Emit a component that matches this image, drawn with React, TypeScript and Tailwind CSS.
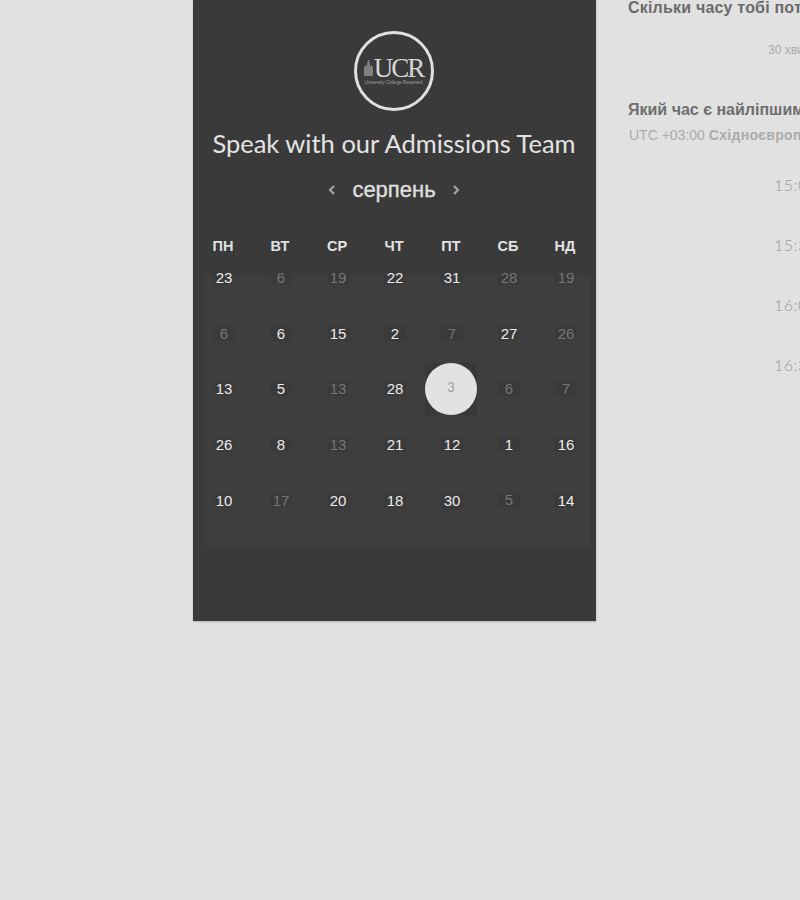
import React from "react";

const weekdays = ["ПН", "ВТ", "СР", "ЧТ", "ПТ", "СБ", "НД"];

type Day = { n: number; dim?: boolean; sel?: boolean; up?: boolean };
const days: Day[] = [
  { n: 23 }, { n: 6, dim: true }, { n: 19, dim: true }, { n: 22 }, { n: 31 }, { n: 28, dim: true }, { n: 19, dim: true },
  { n: 6, dim: true }, { n: 6 }, { n: 15 }, { n: 2 }, { n: 7, dim: true }, { n: 27 }, { n: 26, dim: true },
  { n: 13 }, { n: 5 }, { n: 13, dim: true }, { n: 28 }, { n: 3, sel: true }, { n: 6, dim: true }, { n: 7, dim: true },
  { n: 26 }, { n: 8 }, { n: 13, dim: true }, { n: 21 }, { n: 12 }, { n: 1 }, { n: 16 },
  { n: 10 }, { n: 17, dim: true }, { n: 20 }, { n: 18 }, { n: 30 }, { n: 5, dim: true, up: true }, { n: 14 },
];

const slots = [
  { t: "15:00", cls: "h-[61px] pt-[14px] border-b border-[#dcdcdc]" },
  { t: "15:30", cls: "h-[60px] pt-[13px]" },
  { t: "16:00", cls: "h-[51px] pt-[13px] border-b border-[#dcdcdc]" },
  { t: "16:30", cls: "h-[59px] pt-[22px] border-b border-[#dcdcdc]" },
];

function Logo() {
  return (
    <div className="-ml-[2px] w-[80px] h-[80px] rounded-full border-[3.5px] border-[#e0e0e0] flex flex-col items-center justify-center">
      <div className="flex items-end h-[20px] gap-[1px]">
        <svg width="9" height="17" viewBox="0 0 9 17" className="mb-[2px]">
          <path d="M3 17V5l1-4h1l1 4v12zM0 17V8l2-2 1 2v9zM6 17V8l1-2 2 2v9z" fill="#808080" />
        </svg>
        <span className="font-['Liberation_Serif'] text-[27px] leading-[20px] tracking-[-2px] text-[#d6d6d6]">UCR</span>
      </div>
      <span className="mt-[2px] font-['Liberation_Sans'] text-[4.6px] leading-[5px] text-[#a0a0a0] whitespace-nowrap">University College Reserved</span>
    </div>
  );
}

export default function App() {
  return (
    <div className="w-[800px] h-[900px] overflow-hidden bg-[#e1e1e1] flex items-start pl-[193px] font-['Liberation_Sans',sans-serif]">
      <div className="w-[403px] h-[621px] shrink-0 bg-[#3a3a3a] shadow-[0_1px_2px_rgba(0,0,0,0.2)] flex flex-col">
        <div className="flex justify-center pt-[31px]">
          <Logo />
        </div>
        <h1 className="mt-[15px] h-[34px] -ml-[1px] text-center font-['Lato',sans-serif] text-[25.5px] leading-[34px] text-[#e4e4e4] whitespace-nowrap">
          Speak with our Admissions Team
        </h1>
        <div className="mt-[14px] h-[32px] flex items-center justify-center gap-[14px] pr-[1px]">
          <svg width="10" height="12" viewBox="0 0 10 12" fill="none" stroke="#a3a3a3" strokeWidth="2.2"><path d="M7 2 3 6l4 4" /></svg>
          <span className="text-[22px] leading-[32px] text-[#e0e0e0] w-[86px] text-center [-webkit-text-stroke:0.3px_#e0e0e0]">серпень</span>
          <svg width="10" height="12" viewBox="0 0 10 12" fill="none" stroke="#a3a3a3" strokeWidth="2.2"><path d="m3 2 4 4-4 4" /></svg>
        </div>
        <div className="mt-[30px] ml-[1.5px] grid grid-cols-[repeat(7,57px)] h-[20px]">
          {weekdays.map((d) => (
            <div key={d} className="text-center text-[14.5px] leading-[20px] font-bold text-[#e2e2e2]">{d}</div>
          ))}
        </div>
        <div className="mt-[19px] ml-[12px] w-[385px] h-[272px] bg-[#3e3e3e]">
          <div className="-mt-[5px] -ml-[9.5px] grid grid-cols-[repeat(7,57px)] auto-rows-[55.7px]">
            {days.map((d, i) => (
              <div key={i} className="flex justify-center items-start">
                {d.sel ? (
                  <div className="-mt-[18px] -ml-[2px] w-[52px] h-[52px] bg-[#383838]">
                    <div className="w-[52px] h-[52px] rounded-full bg-[#e2e2e2] flex items-center justify-center pb-[3px] text-[13px] text-[#9c9c9c] font-['Lato',sans-serif]">
                      {d.n}
                    </div>
                  </div>
                ) : (
                  <div
                    className={
                      "w-[22px] h-[15px] bg-[#3a3a3a] flex items-center justify-center text-[15px] leading-[15px] " +
                      (d.dim ? "text-[#767676]" : "text-[#ececec]") +
                      (d.up ? " pb-[2px]" : "")
                    }
                  >
                    {d.n}
                  </div>
                )}
              </div>
            ))}
          </div>
        </div>
      </div>
      <div className="ml-[32px] w-[400px] shrink-0">
        <div className="h-[15px] text-[16px] leading-[15px] tracking-[0.2px] font-bold text-[#6b6b6b] whitespace-nowrap">Скільки часу тобі потрібно?</div>
        <div className="mt-[22px] h-[26px] border-l border-[#dedede] pt-[5px] pl-[139px] text-[12px] leading-[16px] text-[#a8a8a8] whitespace-nowrap">30 хвилин</div>
        <div className="mt-[38px] h-[18px] text-[16px] leading-[18px] font-bold text-[#6e6e6e] whitespace-nowrap">Який час є найліпшим для вас?</div>
        <div className="mt-[7px] h-[18px] pl-[1px] text-[14px] leading-[18px] text-[#ababab] whitespace-nowrap">
          UTC +03:00 <span className="font-bold tracking-[0.3px]">Східноєвропейський час</span>
        </div>
        <div className="mt-[17px] ml-[7px] w-[300px]">
          {slots.map((s) => (
            <div key={s.t} className={"box-border pl-[139px] font-['Lato',sans-serif] font-light text-[16px] leading-[20px] tracking-[0.5px] text-[#9a9a9a] " + s.cls}>
              {s.t}
            </div>
          ))}
        </div>
      </div>
    </div>
  );
}
